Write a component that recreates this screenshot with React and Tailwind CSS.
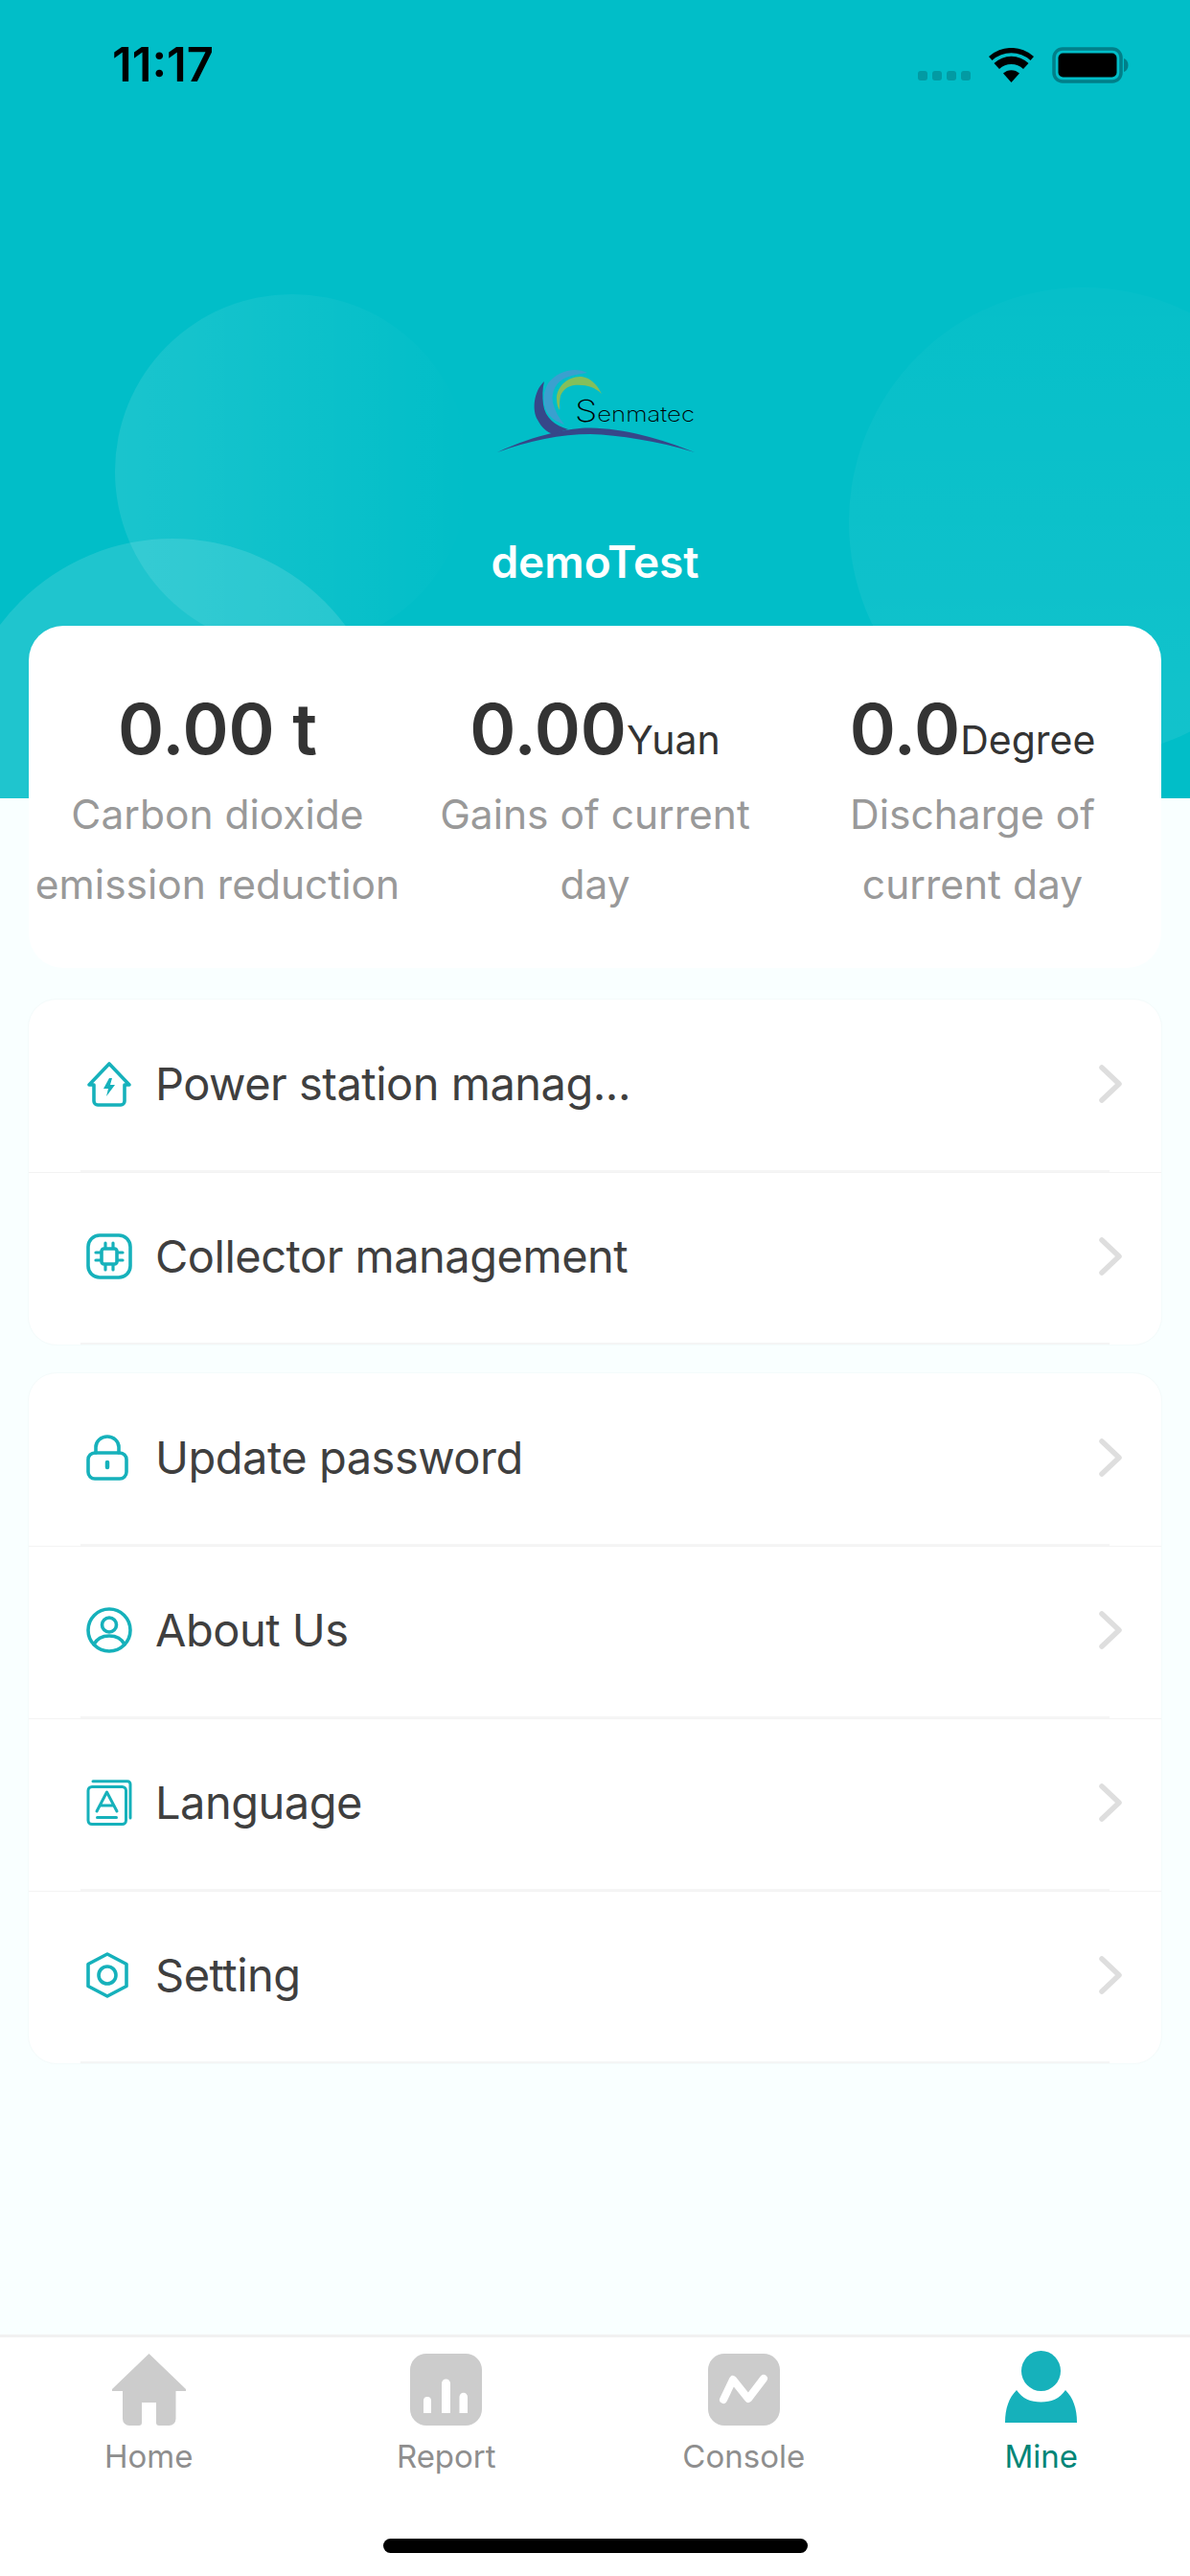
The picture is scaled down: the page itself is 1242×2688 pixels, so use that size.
import React from "react";

const TEAL = "#16B1BB";

const IconStation = () => (
  <svg width="48" height="48" viewBox="0 0 48 48" fill="none" stroke={TEAL} strokeWidth="3.6" strokeLinejoin="round" strokeLinecap="round">
    <path d="M8 25H3L24 3l21 22h-5v17a4 4 0 0 1-4 4H12a4 4 0 0 1-4-4Z" />
    <path d="M24 18 18 29h5l-2 8 9-12h-5l2-7Z" fill={TEAL} stroke="none" />
  </svg>
);

const IconChip = () => (
  <svg width="48" height="48" viewBox="0 0 48 48" fill="none" stroke={TEAL} strokeWidth="3.6" strokeLinecap="round">
    <rect x="2" y="2" width="44" height="44" rx="12" />
    <rect x="16" y="16" width="16" height="16" rx="2.5" />
    <path d="M20 10v5M28 10v5M20 33v5M28 33v5M10 20h5M10 28h5M33 20h5M33 28h5" strokeWidth="3.2" />
  </svg>
);

const IconLock = () => (
  <svg width="48" height="48" viewBox="0 0 48 48" fill="none" stroke={TEAL} strokeWidth="3.6" strokeLinecap="round">
    <rect x="2" y="19" width="40" height="27" rx="7" />
    <path d="M10 19v-6a12 11 0 0 1 24 0v6" />
    <path d="M22 29v5" strokeWidth="4.5" />
  </svg>
);

const IconUser = () => (
  <svg width="48" height="48" viewBox="0 0 48 48" fill="none" stroke={TEAL} strokeWidth="3.6" strokeLinecap="round">
    <circle cx="24" cy="24" r="22" />
    <circle cx="24" cy="18.5" r="7.5" />
    <path d="M8 39c3-6 9-9 16-9s13 3 16 9" />
  </svg>
);

const IconLanguage = () => (
  <svg width="48" height="48" viewBox="0 0 48 48" fill="none" stroke={TEAL} strokeWidth="3" strokeLinecap="round" strokeLinejoin="round">
    <rect x="2" y="7.5" width="39.500" height="39" rx="4" />
    <path d="M7 1.800h36a3 3 0 0 1 3 3V40" />
    <path d="m11 33 10.500-20L32 33M14 27h15" />
    <path d="M11.500 39.500h20" />
  </svg>
);

const IconSetting = () => (
  <svg width="48" height="48" viewBox="0 0 48 48" fill="none" stroke={TEAL} strokeWidth="3.6" strokeLinejoin="round">
    <path d="M22 2 42 12.500v23L22 46 2 35.500v-23Z" />
    <circle cx="22" cy="24" r="9" />
  </svg>
);

const Chevron = () => (
  <svg width="24" height="40" viewBox="0 0 24 40" fill="none" stroke="#DEDEDE" strokeWidth="5.500" strokeLinecap="round" strokeLinejoin="round">
    <path d="m3 3 18 17L3 37" />
  </svg>
);

const Logo = () => (
  <svg width="280" height="130" viewBox="0 0 280 130">
    <path d="M38 112C80 92 120 86 135 86.500c35 .5 75 11.500 109 25.500-39-12-79-18-109-19-30 0-65 7-97 19Z" fill="#364789" />
    <path d="M87 38C76 48 74 68 80 78c4 8 10 13 16 15l16-5C98 84 88 76 86 62c-1-8-1-16 1-24Z" fill="#364789" />
    <path d="M132 29c-14-7-32-1-41 11-7 12-5 26 1 33 4 5 10 8 16 10-6-7-10-15-12-23-2-12 4-22 14-26 8-3 16-4 22-5Z" fill="#3AA0CF" />
    <path d="M147 51c-5-10-12-17-21-18-14-1-27 11-26 24 0 4 1 8 3 11 0-6 0-11 1-15 3-7 8-10 14-11 12-1 22 2 29 9Z" fill="#84BF5A" />
    <text x="119" y="80" textLength="125" lengthAdjust="spacingAndGlyphs" fill="#000" fontFamily="Inter, sans-serif" fontWeight="200">
      <tspan fontSize="32">S</tspan>
      <tspan fontSize="22">enmatec</tspan>
    </text>
  </svg>
);

const Wifi = () => (
  <svg width="47" height="36" viewBox="0 0 47 36">
    <path d="M23.500 36 15 26.500a12.500 12.500 0 0 1 17 0Z" />
    <path d="m11 22-5.500-6a26 26 0 0 1 36 0L36 22a18 18 0 0 0-25 0Z" />
    <path d="M3.500 13 0 9a35 35 0 0 1 47 0l-3.500 4a30 30 0 0 0-40 0Z" />
  </svg>
);

const Battery = () => (
  <svg width="80" height="38" viewBox="0 0 80 38">
    <rect x="2" y="2" width="70" height="34" rx="9" fill="none" stroke="#017F89" strokeWidth="3.500" />
    <rect x="6.500" y="6.500" width="61" height="25" rx="5" fill="#000" />
    <path d="M75 12c3 1 4.500 4 4.500 7s-1.500 6-4.500 7Z" fill="#017F89" />
  </svg>
);

const TabHome = () => (
  <svg width="77" height="75" viewBox="0 0 77 75" fill="#CCCCCC">
    <path d="M38.500 0 77 37v2H66.500v29a7 7 0 0 1-7 7H49a3 3 0 0 1-3-3V51H31v21a3 3 0 0 1-3 3H18a7 7 0 0 1-7-7V39H0v-2Z" />
  </svg>
);

const TabReport = () => (
  <svg width="75" height="75" viewBox="0 0 75 75">
    <rect width="75" height="75" rx="17" fill="#CCCCCC" />
    <path d="M14 62V49a4 4 0 0 1 8 0v13ZM33 62V31a4.500 4.500 0 0 1 9 0v31ZM51.500 62V45a4.250 4.250 0 0 1 8.500 0v17Z" fill="#fff" />
  </svg>
);

const TabConsole = () => (
  <svg width="75" height="75" viewBox="0 0 75 75">
    <rect width="75" height="75" rx="17" fill="#CCCCCC" />
    <path d="M16 48 26 27l16 20 16-21" fill="none" stroke="#fff" strokeWidth="8" strokeLinecap="round" strokeLinejoin="round" />
  </svg>
);

const TabMine = () => (
  <svg width="75" height="75" viewBox="0 0 75 75" fill={TEAL}>
    <ellipse cx="37.500" cy="21" rx="20.500" ry="21" />
    <path d="M0 75C0 60 4 49 12 41c6 9 15 12.500 25.500 12.500S57 50 63 41c8 8 12 19 12 34Z" />
  </svg>
);

const Row = ({ icon, label, last }) => (
  <div className="relative h-[180px] flex items-center pb-[4px] pl-[60px] pr-[41px]">
    <div className="w-[48px] h-[48px] flex-none">{icon}</div>
    <span className="ml-[24px] flex-1 text-[47px] tracking-[-0.5px] text-[#3F3F3F]">{label}</span>
    <Chevron />
    <div className="absolute bottom-0 left-[54px] right-[54px] h-[2px] bg-[#F5F5F5]" />
    {!last && <div className="absolute -bottom-px left-0 right-0 h-px bg-[#F3F3F3]" />}
  </div>
);

const Stat = ({ value, unit, lines }) => (
  <div className="flex-1 flex flex-col items-center">
    <div className="h-[78px] flex items-baseline whitespace-nowrap text-[#333333]">
      <span className="text-[73px] leading-[80px] font-semibold">{value}</span>
      {unit && <span className="text-[41px] leading-[80px]">{unit}</span>}
    </div>
    <div className="mt-[14px] text-[42.5px] leading-[73px] text-[#999999] text-center whitespace-nowrap">
      {lines.map((l) => (
        <div key={l}>{l}</div>
      ))}
    </div>
  </div>
);

const tabs = [
  { label: "Home", icon: <TabHome /> },
  { label: "Report", icon: <TabReport /> },
  { label: "Console", icon: <TabConsole /> },
  { label: "Mine", icon: <TabMine />, active: true },
];

export default function App() {
  return (
    <div className="w-[1242px] h-[2688px] flex flex-col bg-[#F9FFFF] font-[Inter,sans-serif] overflow-hidden">
      <div className="relative h-[833px] flex-none overflow-hidden bg-[#01BEC8]">
        <div className="absolute left-[120px] top-[307px] w-[370px] h-[370px] rounded-full bg-gradient-to-r from-white/10 to-white/0" />
        <div className="absolute left-[-45px] top-[562px] w-[450px] h-[450px] rounded-full bg-white/12" />
        <div className="absolute left-[886px] top-[300px] w-[490px] h-[490px] rounded-full bg-gradient-to-b from-white/2 to-white/7" />
        <div className="relative flex flex-col items-center">
          <div className="w-full h-[136px] pl-[117px] pr-[64px] flex items-center justify-between">
            <span className="text-[49px] font-semibold text-black">11:17</span>
            <div className="flex items-center">
              <div className="flex gap-[5px] mt-[22px] mr-[19px]">
                <div className="w-[10px] h-[10px] rounded-[3px] bg-[#029AA3]" />
                <div className="w-[10px] h-[10px] rounded-[3px] bg-[#029AA3]" />
                <div className="w-[10px] h-[10px] rounded-[3px] bg-[#029AA3]" />
                <div className="w-[10px] h-[10px] rounded-[3px] bg-[#029AA3]" />
              </div>
              <Wifi />
              <div className="ml-[19px]">
                <Battery />
              </div>
            </div>
          </div>
          <div className="mt-[224px]">
            <Logo />
          </div>
          <div className="mt-[68px] text-[46px] leading-[56px] font-semibold text-white">demoTest</div>
        </div>
      </div>

      <div className="relative -mt-[180px] mx-[30px] h-[357px] rounded-[36px] bg-white flex pt-[68px]">
        <Stat value="0.00 t" lines={["Carbon dioxide", "emission reduction"]} />
        <Stat value="0.00" unit="Yuan" lines={["Gains of current", "day"]} />
        <Stat value="0.0" unit="Degree" lines={["Discharge of", "current day"]} />
      </div>

      <div className="flex-1 px-[29px]">
        <div className="mt-[32px] rounded-[30px] bg-white border border-[#F4FBFB] overflow-hidden">
          <Row icon={<IconStation />} label="Power station manag..." />
          <Row icon={<IconChip />} label="Collector management" last />
        </div>
        <div className="mt-[28px] rounded-[30px] bg-white border border-[#F4FBFB] overflow-hidden">
          <Row icon={<IconLock />} label="Update password" />
          <Row icon={<IconUser />} label="About Us" />
          <Row icon={<IconLanguage />} label="Language" />
          <Row icon={<IconSetting />} label="Setting" last />
        </div>
      </div>

      <div className="h-[252px] flex-none bg-white border-t-[3px] border-[#F1F1F1] flex flex-col">
        <div className="flex">
          {tabs.map((t) => (
            <div key={t.label} className="flex-1 flex flex-col items-center">
              <div className={`h-[95px] flex items-end ${t.active ? "pb-[6px]" : "pb-[3px]"}`}>{t.icon}</div>
              <span className={`mt-[9px] text-[33px] leading-[40px] ${t.active ? "text-[#008577]" : "text-[#8E8E8E]"}`}>
                {t.label}
              </span>
            </div>
          ))}
        </div>
        <div className="mt-[66px] mx-auto w-[443px] h-[15px] rounded-full bg-black" />
      </div>
    </div>
  );
}
